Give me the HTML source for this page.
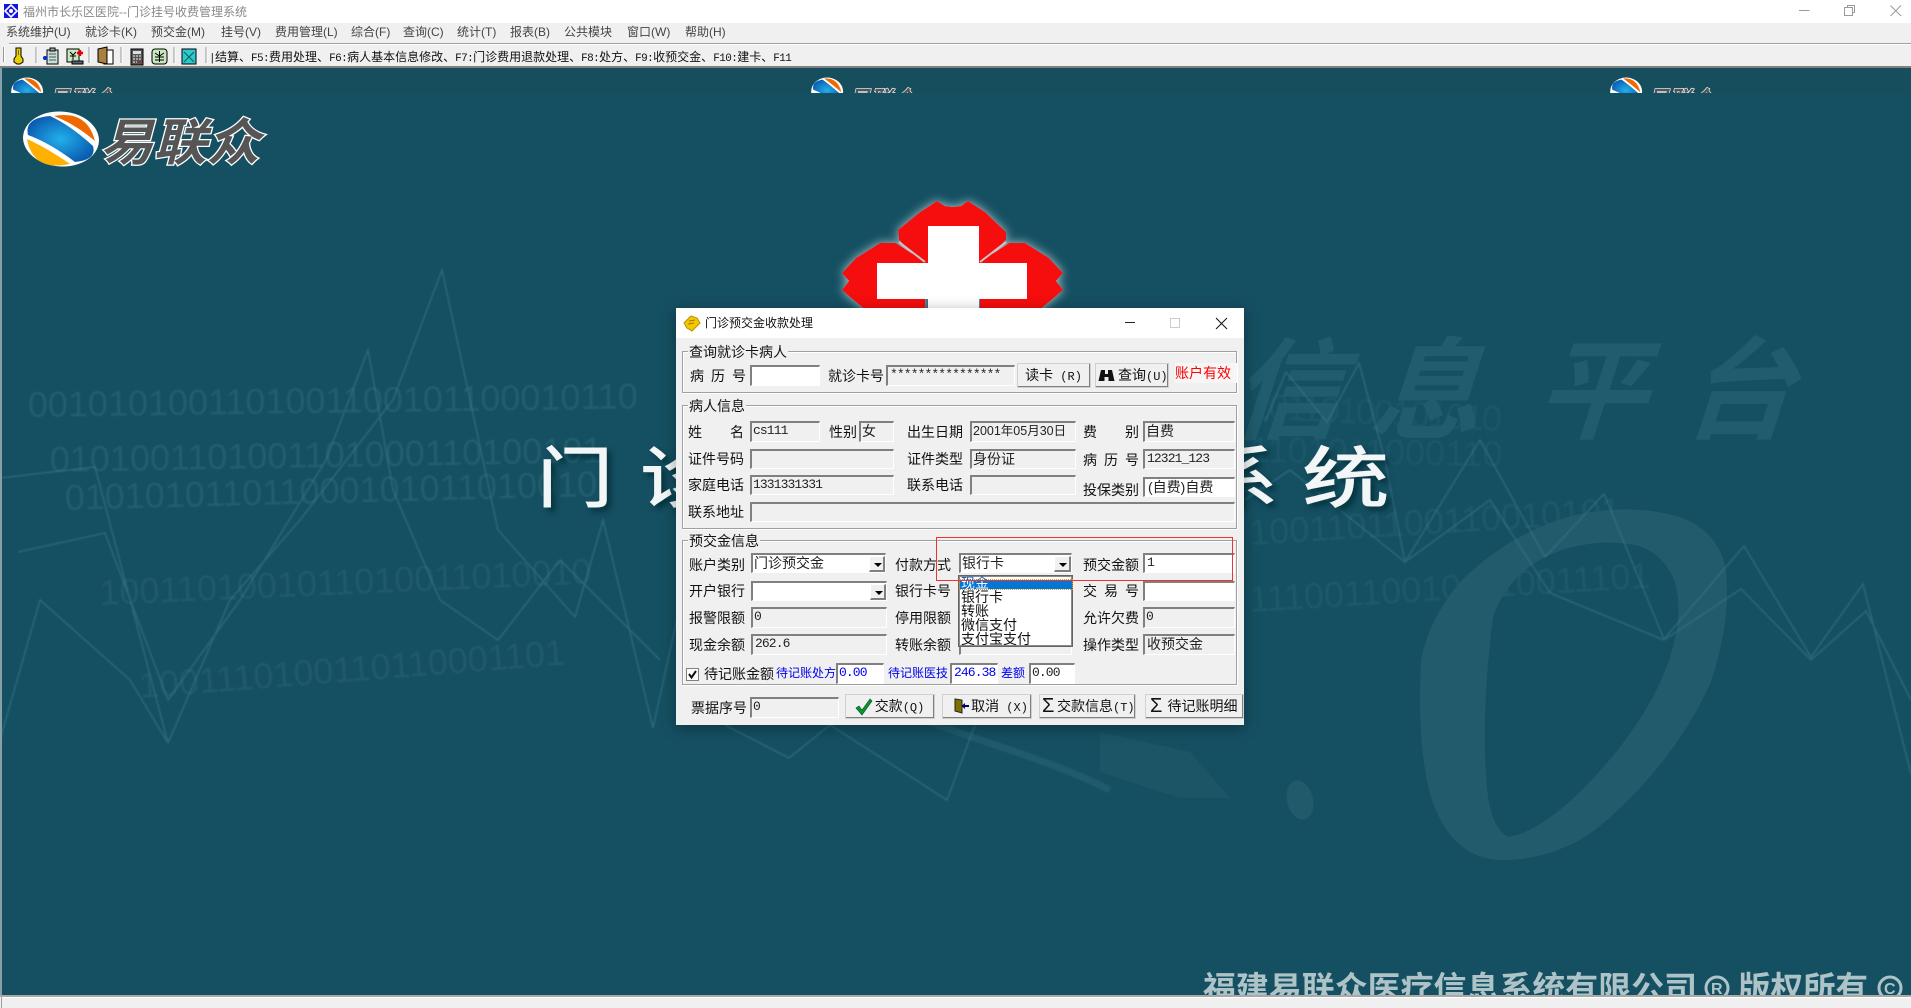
<!DOCTYPE html>
<html lang="zh-CN"><head><meta charset="utf-8"><title>门诊挂号收费管理系统</title>
<style>
html,body{margin:0;padding:0;width:1911px;height:1008px;overflow:hidden;background:#155062}
body{position:relative;font-family:"Liberation Sans","WenQuanYi Zen Hei","Noto Sans CJK SC",sans-serif;font-size:14px;color:#111}
.a,.l,.i,.b,.g,.m{position:absolute;box-sizing:border-box}
.m{top:23px;height:20px;line-height:19px;font-size:12px;color:#444;white-space:pre}
.l{line-height:20px;height:20px;white-space:pre;font-size:14px}
.j{text-align-last:justify;width:56px}
.i{background:#f0f0f0;border-style:solid;border-width:2px 1px 1px 2px;border-color:#808080 #fff #fff #808080;font:13px/16px "Liberation Mono","WenQuanYi Zen Hei",monospace;letter-spacing:-.9px;padding:0 0 0 1px;white-space:pre;overflow:hidden;color:#222}
.c{font:14px/17px "Liberation Sans","WenQuanYi Zen Hei",sans-serif;letter-spacing:0}
.w{background:#fff}
.b{background:#f0f0f0;border-style:solid;border-width:1px 2px 2px 1px;border-color:#fff #808080 #808080 #fff;outline:1px solid #d0d0d0;outline-offset:-1px;font-size:14px;text-align:center;white-space:pre;line-height:22px;color:#111}
.g{border:1px solid #a0a0a0;box-shadow:inset 1px 1px #fff,1px 1px #fff}
.t{position:absolute;background:#f0f0f0;padding:0 1px;height:16px;line-height:16px;font-size:14px;white-space:pre}
.bl{color:#0000ee;font-size:12px}
.ar{position:absolute;box-sizing:border-box;background:#f0f0f0;border-style:solid;border-width:1px 2px 2px 1px;border-color:#fff #808080 #808080 #fff}
.ar:after{content:"";position:absolute;left:4px;top:6px;border-style:solid;border-width:4px 4px 0 4px;border-color:#000 transparent transparent transparent}
.n{font:11px "Liberation Mono",monospace;letter-spacing:-.6px}
</style></head><body>

<svg class="a" style="left:0;top:0" width="1911" height="1008" viewBox="0 0 1911 1008" xmlns="http://www.w3.org/2000/svg">
<defs>
<clipPath id="tc"><rect x="0" y="68" width="1911" height="25"/></clipPath>
<filter id="glow" x="-20%" y="-20%" width="140%" height="140%"><feDropShadow dx="0" dy="0" stdDeviation="5" flood-color="#c8e0e2" flood-opacity="0.85"/></filter>
<filter id="sh" x="-20%" y="-20%" width="140%" height="140%"><feDropShadow dx="4" dy="4" stdDeviation="3" flood-color="#062a36" flood-opacity="0.8"/></filter>
<filter id="bl"><feGaussianBlur stdDeviation=".7"/></filter>
<radialGradient id="sp" cx=".5" cy=".5" r=".55"><stop offset="0" stop-color="#22b0ea"/><stop offset="1" stop-color="#0a5cb0"/></radialGradient>
</defs>
<rect width="1911" height="1008" fill="#155062"/>
<rect x="0" y="68" width="1911" height="25" fill="#174e5e"/>

<!-- faded text -->
<g font-family="Liberation Sans,sans-serif" font-size="36" fill="#2b6778" opacity=".6" filter="url(#bl)">
<text x="28" y="417" transform="rotate(-.8 28 417)">0010101001101001100101100010110</text>
<text x="50" y="472" transform="rotate(-1 50 472)">0101001101001101000110100101</text>
<text x="65" y="510" transform="rotate(-1.5 65 510)">010101011011000101011010010</text>
<text x="100" y="605" transform="rotate(-2.5 100 605)" opacity=".75">1001101001011010011010010</text>
<text x="140" y="698" transform="rotate(-4.5 140 698)" opacity=".8">1001110100110110001101</text>
<text x="1250" y="418" transform="rotate(3 1250 418)" opacity=".55" letter-spacing="-2">10110100101010</text>
<text x="1250" y="462" transform="rotate(1 1250 462)" opacity=".55">1101011000110</text>
<text x="1250" y="545" transform="rotate(-3.5 1250 545)" opacity=".7">1001101100110010101</text>
<text x="1250" y="612" transform="rotate(-3.5 1250 612)" opacity=".7">111001100101110011101</text>
</g>

<!-- 信息平台 -->
<g font-family="Noto Sans CJK SC,sans-serif" font-weight="700" font-size="110" fill="#1f5c6d">
<text x="1219" y="430" transform="skewX(-18)" style="transform-box:fill-box;transform-origin:left bottom">信</text>
<text x="1358" y="430" transform="skewX(-18)" style="transform-box:fill-box;transform-origin:left bottom">息</text>
<text x="1524" y="430" transform="skewX(-18)" style="transform-box:fill-box;transform-origin:left bottom">平</text>
<text x="1671" y="430" transform="skewX(-18)" style="transform-box:fill-box;transform-origin:left bottom">台</text>
</g>

<!-- big 0 and dot -->
<path fill-rule="evenodd" fill="#225b6c" d="M1421,661C1418,720 1422,765 1431,797C1445,840 1470,860 1503,860C1535,860 1565,850 1591,833C1640,795 1685,740 1710,684C1722,650 1730,610 1726,571C1722,545 1705,525 1679,517C1650,508 1620,508 1591,512C1540,520 1495,548 1462,580C1440,605 1425,635 1421,661ZM1493,616C1485,680 1482,745 1488,797C1492,820 1498,832 1509,837C1545,830 1585,790 1617,751C1645,715 1665,680 1674,643C1680,620 1680,598 1674,580C1665,558 1648,546 1628,544C1600,540 1570,545 1545,557C1520,570 1503,590 1493,616Z"/>
<ellipse cx="1300" cy="800" rx="13" ry="20" fill="#205a6b" transform="rotate(-14 1300 800)"/>
<polygon points="1100,732 1190,752 1230,798 1180,798 1100,772" fill="#1b5566"/>
<path d="M930,722C990,745 1050,760 1110,790" stroke="#2a6677" stroke-width="7" fill="none" opacity=".5" filter="url(#bl)"/>

<!-- waves -->
<g fill="none" stroke="#3a7a8c" stroke-width="1.6" opacity=".55" filter="url(#bl)">
<polyline points="168,743 230,600 300,520 393,400 442,270 498,530 575,617 603,520 653,728 690,560"/>
<polyline points="326,460 368,350 393,490 440,600 498,640 560,560 660,660"/>
<polyline points="0,478 95,467 168,743"/>
<polyline points="18,552 105,533 168,700 240,600 326,460"/>
<polyline points="0,740 40,600 130,680 168,743"/>
<polyline points="725,725 789,758 830,725 947,800 975,725"/>
<polyline points="1265,422 1286,372 1327,422 1359,363 1385,460 1405,562 1480,440 1545,557 1604,494 1664,639 1744,546 1811,657 1863,584 1911,774"/>
<polyline points="1245,500 1290,470 1405,562 1490,500 1550,593 1664,640 1741,589 1811,660 1866,611 1911,700"/>
</g>

<!-- emblem -->
<g filter="url(#glow)">
<polygon fill="#f61010" points="937,201 945,206 953,207 961,206 968,201 985,212 1006,232 1006,240 985,262 978,270 928,270 920,262 899,240 898,230 920,212"/>
<polygon fill="#f61010" points="880,243 896,243 925,262 925,312 868,312 850,297 842,290 849,281 842,273 856,258"/>
<polygon fill="#f61010" points="1025,243 1009,243 980,262 980,312 1037,312 1055,297 1063,290 1056,281 1063,273 1049,258"/>
</g>
<rect x="928" y="226" width="51" height="90" fill="#fff"/>
<rect x="877" y="263" width="150" height="36" fill="#fff"/>
<path d="M925,262L899,242M980,262L1006,242" stroke="#c8c8c8" stroke-width="2"/>

<!-- big title -->
<g font-family="Noto Sans CJK SC,sans-serif" font-size="76" font-weight="500" fill="#f2f6f6" filter="url(#sh)">
<text transform="translate(537 502) scale(1,.88)">门</text>
<text transform="translate(640 502) scale(1,.88)">诊</text>
<text transform="translate(1195 502) scale(1.1,.88)">系</text>
<text transform="translate(1302 502) scale(1.15,.88)">统</text>
</g>

<!-- big logo -->
<g>
<ellipse cx="61" cy="139" rx="38" ry="27.5" fill="#fff" transform="rotate(4 61 139)"/>
<path d="M50,116Q24,118 28,135Q50,143 75,162Q97,160 93,146Q70,125 50,116Z" fill="url(#sp)"/>
<path d="M54,116Q87,110 95,141Q75,124 54,116Z" fill="#ee6a00"/>
<path d="M27,139Q47,148 70,164Q33,172 27,139Z" fill="#ffb000"/>
<text x="100" y="160" font-family="Noto Sans CJK SC,sans-serif" font-weight="700" font-style="italic" font-size="50" textLength="160" lengthAdjust="spacingAndGlyphs" fill="#555" stroke="#fff" stroke-width="2.5" paint-order="stroke">易联众</text>
</g>
<!-- small tile logos -->
<g clip-path="url(#tc)">
<g transform="translate(1.5 33) scale(.42)">
<ellipse cx="61" cy="139" rx="38" ry="33" fill="#fff"/><path d="M50,111Q24,115 28,135Q50,143 75,162Q97,160 93,146Q70,125 50,111Z" fill="url(#sp)"/><path d="M54,108Q87,106 95,141Q75,124 54,108Z" fill="#ee6a00"/>
<text x="110" y="178" font-family="Noto Sans CJK SC,sans-serif" font-weight="700" font-style="italic" font-size="56" textLength="160" lengthAdjust="spacingAndGlyphs" fill="#555" stroke="#fff" stroke-width="3" paint-order="stroke">易联众</text></g>
<g transform="translate(801.5 33) scale(.42)">
<ellipse cx="61" cy="139" rx="38" ry="33" fill="#fff"/><path d="M50,111Q24,115 28,135Q50,143 75,162Q97,160 93,146Q70,125 50,111Z" fill="url(#sp)"/><path d="M54,108Q87,106 95,141Q75,124 54,108Z" fill="#ee6a00"/>
<text x="110" y="178" font-family="Noto Sans CJK SC,sans-serif" font-weight="700" font-style="italic" font-size="56" textLength="160" lengthAdjust="spacingAndGlyphs" fill="#555" stroke="#fff" stroke-width="3" paint-order="stroke">易联众</text></g>
<g transform="translate(1600.5 33) scale(.42)">
<ellipse cx="61" cy="139" rx="38" ry="33" fill="#fff"/><path d="M50,111Q24,115 28,135Q50,143 75,162Q97,160 93,146Q70,125 50,111Z" fill="url(#sp)"/><path d="M54,108Q87,106 95,141Q75,124 54,108Z" fill="#ee6a00"/>
<text x="110" y="178" font-family="Noto Sans CJK SC,sans-serif" font-weight="700" font-style="italic" font-size="56" textLength="160" lengthAdjust="spacingAndGlyphs" fill="#555" stroke="#fff" stroke-width="3" paint-order="stroke">易联众</text></g>
</g>

<!-- copyright -->
<g font-family="Noto Sans CJK SC,sans-serif" font-weight="700" fill="#aec3c8">
<text x="1203" y="1000" font-size="33" textLength="494" lengthAdjust="spacingAndGlyphs">福建易联众医疗信息系统有限公司</text>
<circle cx="1717" cy="988" r="11" fill="none" stroke="#aec3c8" stroke-width="3"/>
<text x="1711" y="994" font-size="16" font-family="Liberation Sans,sans-serif">R</text>
<text x="1738" y="1000" font-size="33" textLength="130" lengthAdjust="spacingAndGlyphs">版权所有</text>
<circle cx="1890" cy="988" r="11" fill="none" stroke="#aec3c8" stroke-width="3"/>
<text x="1884" y="994" font-size="16" font-family="Liberation Sans,sans-serif">C</text>
</g>
</svg>

<!-- frame -->
<div class="a" style="left:0;top:68px;width:2px;height:928px;background:#8aa0a8"></div>
<div class="a" style="left:0;top:995px;width:1911px;height:13px;background:#f0f0f0;border-top:2px solid #a8a8a8;box-shadow:inset 0 1px #fff"></div>
<div class="a" style="left:1px;top:997px;width:1px;height:11px;background:#a0a0a0"></div>

<!-- title bar -->
<div class="a" style="left:0;top:0;width:1911px;height:23px;background:#fff"></div>
<svg class="a" style="left:4px;top:4px" width="14" height="14" viewBox="0 0 14 14"><rect width="14" height="14" fill="#1414e0"/><path d="M7,1L13,7L7,13L1,7Z" fill="none" stroke="#fff" stroke-width="1.6"/><circle cx="7" cy="7" r="2" fill="#fff"/></svg>
<div class="a" style="left:23px;top:3px;height:18px;line-height:18px;font-size:12px;color:#888;white-space:pre">福州市长乐区医院--门诊挂号收费管理系统</div>
<svg class="a" style="left:1790px;top:0" width="121" height="23" viewBox="0 0 121 23" fill="none" stroke="#9a9a9a"><path d="M9,10.5H19.5"/><rect x="54.5" y="7.5" width="8" height="8"/><path d="M57.5,7.5V5.5H64.5V12.5H62.5"/><path d="M100.5,5.5L111,16M111,5.5L100.5,16"/></svg>

<!-- menu -->
<div class="a" style="left:0;top:23px;width:1911px;height:20px;background:#f0f0f0"></div>
<div class="m" style="left:6px">系统维护(U)</div><div class="m" style="left:85px">就诊卡(K)</div><div class="m" style="left:151px">预交金(M)</div><div class="m" style="left:221px">挂号(V)</div><div class="m" style="left:275px">费用管理(L)</div><div class="m" style="left:351px">综合(F)</div><div class="m" style="left:403px">查询(C)</div><div class="m" style="left:457px">统计(T)</div><div class="m" style="left:510px">报表(B)</div><div class="m" style="left:564px">公共模块</div><div class="m" style="left:627px">窗口(W)</div><div class="m" style="left:685px">帮助(H)</div>

<!-- toolbar -->
<div class="a" style="left:0;top:43px;width:1911px;height:25px;background:#f0f0f0;border-top:1px solid #a0a0a0;border-bottom:2px solid #808080;box-shadow:inset 0 1px #fff"></div>
<div class="a" style="left:0;top:43px;width:9px;height:2px;background:#f0f0f0"></div>
<svg class="a" style="left:0;top:44px" width="210" height="22" viewBox="0 0 210 22" fill="none">
<path d="M3.5,3V18M36,3V19M89,3V19M121,3V19M174,3V19M206,3V19" stroke="#999"/>
<path d="M4.5,3V18M37,3V19M90,3V19M122,3V19M175,3V19M207,3V19" stroke="#fff"/>
<path d="M16,4H21V12L23,15V18L20,20H17L14,18V15L16,12Z" fill="#e8d000" stroke="#000"/><path d="M18.500,6V11" stroke="#665"/>
<rect x="47" y="6" width="11" height="14" fill="#c8e0d8" stroke="#000"/><rect x="50" y="4" width="5" height="3" fill="#aaa" stroke="#000"/><path d="M49,10H56M49,13H56M49,16H56" stroke="#555"/><path d="M43,14H47M45,12V16" stroke="#0030e0" stroke-width="2.400"/>
<rect x="67" y="5" width="12" height="13" fill="#c8e8c0" stroke="#000"/><path d="M70,8L73,11L76,8M73,11V16M70,12H76" stroke="#000"/><path d="M77,9H83M80,6V12" stroke="#e00000" stroke-width="2.400"/><rect x="72" y="17" width="11" height="3" fill="#567" stroke="#000"/>
<rect x="104" y="6" width="9" height="14" fill="#fff" stroke="#000"/><path d="M98,5L107,3V20L98,18Z" fill="#a88040" stroke="#000"/>
<rect x="131" y="5" width="12" height="16" fill="#555" stroke="#000"/><rect x="133" y="7" width="8" height="3" fill="#ddd"/><path d="M133,12H141M133,15H141M133,18H137" stroke="#eee" stroke-dasharray="2 1"/><path d="M138,18H141" stroke="#e00"/>
<rect x="152" y="5" width="15" height="15" rx="3" fill="#c8e8c0" stroke="#000"/><path d="M155,9L159.500,12L164,9M159.500,7V18M155,13H164M155,16H164" stroke="#000"/>
<rect x="182" y="5" width="14" height="15" fill="#30c8d0" stroke="#000"/><path d="M184,8L194,18M194,8L184,18" stroke="#064"/>
</svg>
<div class="a" style="left:209px;top:47px;height:20px;line-height:20px;font-size:12px;font-family:'WenQuanYi Zen Hei','Noto Sans CJK SC',sans-serif;white-space:pre;color:#111"><span class="n">|</span>结算、<span class="n">F5:</span>费用处理、<span class="n">F6:</span>病人基本信息修改、<span class="n">F7:</span>门诊费用退款处理、<span class="n">F8:</span>处方、<span class="n">F9:</span>收预交金、<span class="n">F10:</span>建卡、<span class="n">F11</span></div>

<!-- DIALOG -->
<div class="a" style="left:676px;top:308px;width:568px;height:417px;background:#f0f0f0;box-shadow:0 3px 14px rgba(0,0,0,.35)"></div>
<div class="a" style="left:676px;top:308px;width:568px;height:30px;background:#fff"></div>
<svg class="a" style="left:683px;top:315px" width="18" height="17" viewBox="0 0 18 17"><path d="M8,1L14,3L17,8L9,16L4,13L1,8Z" fill="#f4c800" stroke="#b89000"/><path d="M6,6L12,5M5,9L11,8" stroke="#a07800"/></svg>
<div class="a" style="left:705px;top:314px;height:18px;line-height:18px;font-size:12px;white-space:pre">门诊预交金收款处理</div>
<svg class="a" style="left:1120px;top:312px" width="120" height="20" viewBox="0 0 120 20" fill="none"><path d="M5,10.500H15" stroke="#222"/><rect x="50.500" y="6.500" width="9" height="9" stroke="#ccc"/><path d="M96,6L107,17M107,6L96,17" stroke="#111"/></svg>

<!-- group 1 -->
<div class="g" style="left:682px;top:351px;width:555px;height:42px"></div>
<div class="t" style="left:688px;top:344px">查询就诊卡病人</div>
<div class="l j" style="left:690px;top:366px">病 历 号</div>
<div class="i w" style="left:750px;top:365px;width:70px;height:21px"></div>
<div class="l" style="left:828px;top:366px">就诊卡号</div>
<div class="i" style="left:886px;top:365px;width:129px;height:21px;padding-left:2px">****************</div>
<div class="b" style="left:1017px;top:363px;width:74px;height:25px">读卡<span style="font:12px 'Liberation Mono'"> (R)</span></div>
<div class="b" style="left:1095px;top:363px;width:74px;height:25px;padding-left:22px">查询<span style="font:12px 'Liberation Mono'">(U)</span></div>
<svg class="a" style="left:1098px;top:369px" width="17" height="13" viewBox="0 0 17 13"><path d="M3,1H7V5H10V1H14L16.500,12H10.500V8H6.500V12H.5Z" fill="#111"/></svg>
<div class="a" style="left:1175px;top:363px;width:62px;height:20px;line-height:20px;font-size:14px;color:#f00;white-space:pre;background:#f6f6f6;padding-left:0">账户有效</div>

<!-- group 2 -->
<div class="g" style="left:682px;top:405px;width:555px;height:124px"></div>
<div class="t" style="left:688px;top:398px">病人信息</div>

<div class="l j" style="left:688px;top:422px">姓 名</div>
<div class="i" style="left:750px;top:421px;width:70px;height:21px">cs111</div>
<div class="l" style="left:829px;top:422px">性别</div>
<div class="i c" style="left:859px;top:421px;width:35px;height:21px">女</div>
<div class="l" style="left:907px;top:422px">出生日期</div>
<div class="i" style="left:970px;top:421px;width:106px;height:21px;font-family:'Liberation Sans','WenQuanYi Zen Hei',sans-serif;font-size:12.500px;letter-spacing:0">2001年05月30日</div>
<div class="l j" style="left:1083px;top:422px">费 别</div>
<div class="i c" style="left:1143px;top:421px;width:92px;height:21px">自费</div>

<div class="l" style="left:688px;top:449px">证件号码</div>
<div class="i" style="left:750px;top:449px;width:144px;height:20px"></div>
<div class="l" style="left:907px;top:449px">证件类型</div>
<div class="i c" style="left:970px;top:449px;width:106px;height:20px">身份证</div>
<div class="l j" style="left:1083px;top:450px">病 历 号</div>
<div class="i" style="left:1143px;top:449px;width:92px;height:20px;padding-left:2px">12321_123</div>

<div class="l" style="left:688px;top:475px">家庭电话</div>
<div class="i" style="left:750px;top:475px;width:144px;height:20px">1331331331</div>
<div class="l" style="left:907px;top:475px">联系电话</div>
<div class="i" style="left:970px;top:475px;width:106px;height:20px"></div>
<div class="l" style="left:1083px;top:480px">投保类别</div>
<div class="i c w" style="left:1143px;top:477px;width:92px;height:20px;padding-left:3px">(自费)自费</div>

<div class="l" style="left:688px;top:502px">联系地址</div>
<div class="i" style="left:750px;top:502px;width:485px;height:20px"></div>

<!-- group 3 -->
<div class="g" style="left:682px;top:540px;width:555px;height:145px"></div>
<div class="t" style="left:688px;top:533px">预交金信息</div>

<div class="l" style="left:689px;top:555px">账户类别</div>
<div class="i c w" style="left:751px;top:553px;width:135px;height:20px">门诊预交金</div>
<div class="ar" style="left:869px;top:556px;width:16px;height:16px"></div>
<div class="l" style="left:895px;top:555px">付款方式</div>
<div class="i c w" style="left:959px;top:553px;width:113px;height:20px">银行卡</div>
<div class="ar" style="left:1054px;top:556px;width:17px;height:16px"></div>
<div class="l" style="left:1083px;top:555px">预交金额</div>
<div class="i w" style="left:1143px;top:553px;width:92px;height:20px;padding-left:2px">1</div>

<div class="l" style="left:689px;top:581px">开户银行</div>
<div class="i w" style="left:751px;top:581px;width:136px;height:20px"></div>
<div class="ar" style="left:870px;top:584px;width:16px;height:16px"></div>
<div class="l" style="left:895px;top:581px">银行卡号</div>
<div class="l j" style="left:1083px;top:581px">交 易 号</div>
<div class="i w" style="left:1143px;top:581px;width:92px;height:20px"></div>

<div class="l" style="left:689px;top:608px">报警限额</div>
<div class="i" style="left:751px;top:607px;width:136px;height:21px">0</div>
<div class="l" style="left:895px;top:608px">停用限额</div>
<div class="l" style="left:1083px;top:608px">允许欠费</div>
<div class="i" style="left:1143px;top:607px;width:92px;height:21px">0</div>

<div class="l" style="left:689px;top:635px">现金余额</div>
<div class="i" style="left:751px;top:634px;width:136px;height:21px;padding-left:2px">262.6</div>
<div class="l" style="left:895px;top:635px">转账余额</div>
<div class="i" style="left:959px;top:634px;width:113px;height:21px"></div>
<div class="l" style="left:1083px;top:635px">操作类型</div>
<div class="i c" style="left:1143px;top:634px;width:92px;height:21px;padding-left:2px">收预交金</div>

<!-- checkbox row -->
<div class="a" style="left:686px;top:668px;width:13px;height:13px;background:#fff;border:1px solid #808080;box-sizing:border-box"></div>
<svg class="a" style="left:686px;top:668px" width="13" height="13" viewBox="0 0 13 13"><path d="M3,6L5.500,9.500L10,3" fill="none" stroke="#111" stroke-width="2"/></svg>
<div class="l" style="left:704px;top:664px">待记账金额</div>
<div class="l bl" style="left:776px;top:663px">待记账处方</div>
<div class="i w" style="left:836px;top:663px;width:48px;height:21px;color:#00e;padding-left:1px">0.00</div>
<div class="l bl" style="left:888px;top:663px">待记账医技</div>
<div class="i w" style="left:950px;top:663px;width:48px;height:21px;color:#00e;padding-left:2px">246.38</div>
<div class="l bl" style="left:1001px;top:663px">差额</div>
<div class="i w" style="left:1029px;top:663px;width:46px;height:21px;padding-left:1px">0.00</div>

<!-- bottom -->
<div class="l" style="left:691px;top:698px">票据序号</div>
<div class="i" style="left:750px;top:697px;width:89px;height:21px">0</div>
<div class="b" style="left:845px;top:694px;width:90px;height:25px;padding-left:20px">交款<span style="font:12px 'Liberation Mono'">(Q)</span></div>
<svg class="a" style="left:855px;top:698px" width="18" height="18" viewBox="0 0 18 18"><path d="M1,10L4,8L7,12L15,1L17,3L7,17Z" fill="#0a9a20" stroke="#044" stroke-width=".6"/></svg>
<div class="b" style="left:942px;top:694px;width:90px;height:25px;padding-left:26px">取消<span style="font:12px 'Liberation Mono'"> (X)</span></div>
<svg class="a" style="left:954px;top:698px" width="16" height="16" viewBox="0 0 16 16"><path d="M1,1L8,2V15L1,13Z" fill="#807000" stroke="#222"/><path d="M8,8H15" stroke="#006" stroke-width="2"/><path d="M11,5L7.500,8L11,11Z" fill="#006"/></svg>
<div class="b" style="left:1039px;top:694px;width:97px;height:25px;padding-left:17px">交款信息<span style="font:12px 'Liberation Mono'">(T)</span></div>
<div class="a" style="left:1042px;top:695px;width:14px;height:22px;font:400 20px/22px 'Liberation Sans',sans-serif;color:#111">Σ</div>
<div class="b" style="left:1145px;top:694px;width:99px;height:25px;padding-left:17px">待记账明细</div>
<div class="a" style="left:1150px;top:695px;width:14px;height:22px;font:400 20px/22px 'Liberation Sans',sans-serif;color:#111">Σ</div>

<!-- dropdown -->
<div class="a" style="left:958px;top:575px;width:115px;height:72px;background:#fff;border:1px solid #646464;box-sizing:border-box;overflow:hidden;outline:1px solid #8a8a8a;outline-offset:-2px"></div>
<div class="a" style="left:960px;top:580px;width:112px;height:9px;background:#0078d7;outline:1px dotted #e89020"></div>
<div class="a" style="left:961px;top:576px;height:14px;line-height:14px;font-size:14px;white-space:pre;overflow:hidden;background:linear-gradient(#1a60b0 0,#1a60b0 4px,#fff 4px,#fff 100%);-webkit-background-clip:text;background-clip:text;color:transparent">现金</div>
<div class="a" style="left:961px;top:590px;height:14px;line-height:14px;white-space:pre;color:#111">银行卡</div>
<div class="a" style="left:961px;top:604px;height:14px;line-height:14px;white-space:pre;color:#111">转账</div>
<div class="a" style="left:961px;top:618px;height:14px;line-height:14px;white-space:pre;color:#111">微信支付</div>
<div class="a" style="left:961px;top:632px;height:14px;line-height:14px;white-space:pre;color:#111">支付宝支付</div>

<!-- red box -->
<div class="a" style="left:936px;top:537px;width:297px;height:44px;border:1px solid #ee3333;box-sizing:border-box"></div>
</body></html>
